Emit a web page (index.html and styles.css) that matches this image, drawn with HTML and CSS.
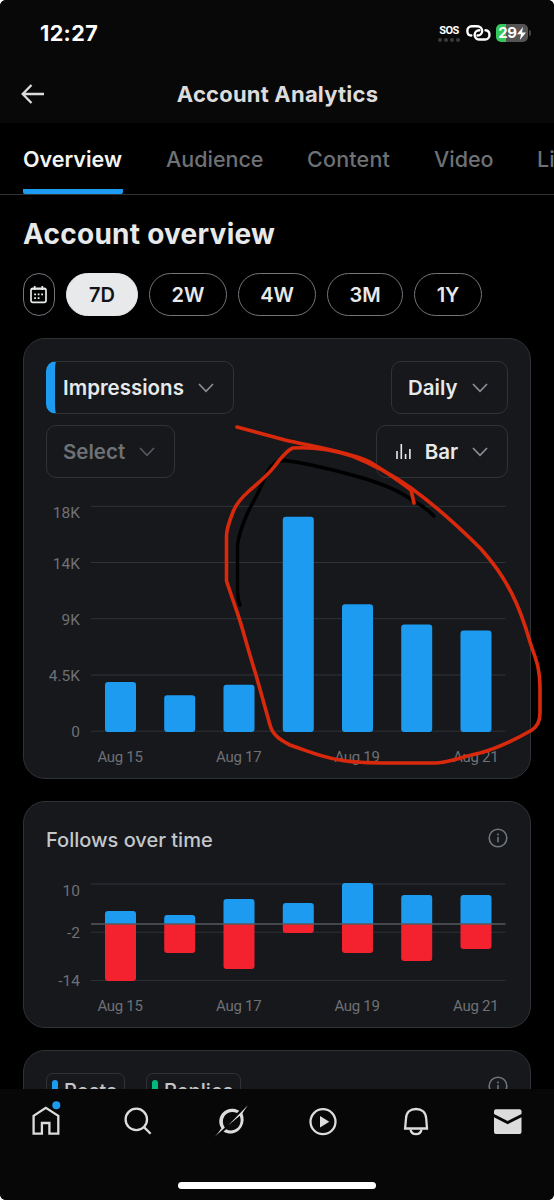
FILE: index.html
```html
<!DOCTYPE html>
<html lang="en">
<head>
<meta charset="utf-8">
<title>Account Analytics</title>
<link rel="stylesheet" href="styles.css">
</head>
<body>
<div class="screen">

  <header class="header">
    <div class="statusbar">
      <span class="time">12:27</span>
      <div class="status-icons">
        <div class="sos"><span>SOS</span><div class="dots"><i></i><i></i><i></i><i></i></div></div>
        <svg class="link" width="25" height="18" viewBox="0 0 26 18" fill="none" stroke="#fff" stroke-width="2.5" stroke-linecap="round">
          <path d="M5.5 11.6C2.8 11.4 1.4 9.2 1.4 6.8C1.4 4 3.4 2 6 2H11.5C14.6 2 16.8 4 16.8 6.8C16.8 9.6 14.6 11.6 12 11.6"/>
          <path d="M20.3 6.2C23 6.4 24.4 8.6 24.4 11C24.4 13.8 22.4 15.8 19.8 15.8H14.3C11.2 15.8 9 13.8 9 11C9 8.2 11.2 6.2 13.8 6.2"/>
        </svg>
        <div class="battery">
          <span>29</span>
          <svg width="9" height="13" viewBox="0 0 9 13"><path d="M6 0L0 7.3H4L2.8 13L9 5.4H5z" fill="#fff"/></svg>
        </div>
        <i class="battery-tip"></i>
      </div>
    </div>
    <div class="titlebar">
      <svg class="back" width="24" height="20" viewBox="0 0 24 20" fill="none" stroke="#dcdcdc" stroke-width="2.3">
        <path d="M10.5 1L1.7 10L10.5 19M1.7 10H23"/>
      </svg>
      <h1>Account Analytics</h1>
    </div>
  </header>

  <nav class="tabs">
    <a class="tab active">Overview</a>
    <a class="tab audience">Audience</a>
    <a class="tab content">Content</a>
    <a class="tab video">Video</a>
    <a class="tab">Live</a>
  </nav>

  <main class="main">
    <h2>Account overview</h2>

    <div class="ranges">
      <button class="pill calendar">
        <svg width="17" height="18" viewBox="0 0 17 18" fill="none" stroke="#e7e9ea" stroke-width="1.7">
          <rect x="1" y="2.4" width="15" height="14" rx="1.8"/>
          <path d="M4.7 0V4M12.3 0V4M1 3H16"/>
          <path d="M4.2 8.3H6M7.7 8.3H9.5M11.2 8.3H13M4.2 12.2H6M7.7 12.2H9.5" stroke-width="1.8"/>
        </svg>
      </button>
      <button class="pill d7 selected">7D</button>
      <button class="pill w2">2W</button>
      <button class="pill w4">4W</button>
      <button class="pill m3">3M</button>
      <button class="pill y1">1Y</button>
    </div>

    <section class="card impressions">
      <div class="selects">
        <div class="select metric">Impressions<svg width="16" height="10" viewBox="0 0 16 10"><path d="M1 1L8 8.3L15 1"/></svg></div>
        <div class="select daily">Daily<svg width="16" height="10" viewBox="0 0 16 10"><path d="M1 1L8 8.3L15 1"/></svg></div>
      </div>
      <div class="selects">
        <div class="select empty">Select<svg width="16" height="10" viewBox="0 0 16 10"><path d="M1 1L8 8.3L15 1"/></svg></div>
        <div class="select type">
          <svg class="bars" width="15" height="17" viewBox="0 0 15 17"><path d="M1 8V16M5.3 1V16M9.6 11V16M13.9 6V16"/></svg>
          Bar<svg width="16" height="10" viewBox="0 0 16 10"><path d="M1 1L8 8.3L15 1"/></svg>
        </div>
      </div>
      <svg class="chart" width="506" height="286" viewBox="24 490 506 286">
        <path class="grid" d="M91 506.3H505.5M91 562.5H505.5M91 618.7H505.5M91 675H505.5M91 731.2H505.5"/>
        <g class="ylabels">
          <text x="80" y="518.3">18K</text>
          <text x="80" y="568.5">14K</text>
          <text x="80" y="624.7">9K</text>
          <text x="80" y="681">4.5K</text>
          <text x="80" y="737.3">0</text>
        </g>
        <g class="up">
          <rect x="105" y="682" width="31" height="50" rx="3"/>
          <rect x="164.2" y="695.2" width="31" height="36.8" rx="3"/>
          <rect x="223.5" y="684.7" width="31" height="47.3" rx="3"/>
          <rect x="282.8" y="516.8" width="31" height="215.2" rx="3"/>
          <rect x="342" y="604.2" width="31" height="127.8" rx="3"/>
          <rect x="401.2" y="624.5" width="31" height="107.5" rx="3"/>
          <rect x="460.5" y="630.4" width="31" height="101.6" rx="3"/>
        </g>
        <g class="xlabels">
          <text x="120" y="762.3">Aug 15</text>
          <text x="238.7" y="762.3">Aug 17</text>
          <text x="357" y="762.3">Aug 19</text>
          <text x="475.7" y="762.3">Aug 21</text>
        </g>
      </svg>
    </section>

    <section class="card follows">
      <div class="card-head">
        <h3>Follows over time</h3>
        <svg class="info" width="20" height="20" viewBox="0 0 20 20"><circle cx="10" cy="10" r="8.8"/><path d="M10 9V14.3M10 5.6V7.4"/></svg>
      </div>
      <svg class="chart" width="506" height="155" viewBox="24 872 506 155">
        <path class="grid" d="M91 884H505.5M91 932.2H505.5M91 980.6H505.5"/>
        <g class="ylabels">
          <text x="80" y="896">10</text>
          <text x="80" y="938">-2</text>
          <text x="80" y="986.3">-14</text>
        </g>
        <g class="up">
          <path d="M105 924V914a3 3 0 0 1 3-3h25a3 3 0 0 1 3 3v10z"/>
          <path d="M164.2 924V918a3 3 0 0 1 3-3h25a3 3 0 0 1 3 3v6z"/>
          <path d="M223.5 924V902a3 3 0 0 1 3-3h25a3 3 0 0 1 3 3v22z"/>
          <path d="M282.8 924V906a3 3 0 0 1 3-3h25a3 3 0 0 1 3 3v18z"/>
          <path d="M342 924V886a3 3 0 0 1 3-3h25a3 3 0 0 1 3 3v38z"/>
          <path d="M401.2 924V898a3 3 0 0 1 3-3h25a3 3 0 0 1 3 3v26z"/>
          <path d="M460.5 924V898a3 3 0 0 1 3-3h25a3 3 0 0 1 3 3v26z"/>
        </g>
        <g class="down">
          <path d="M105 924V978a3 3 0 0 0 3 3h25a3 3 0 0 0 3-3V924z"/>
          <path d="M164.2 924V950a3 3 0 0 0 3 3h25a3 3 0 0 0 3-3V924z"/>
          <path d="M223.5 924V966a3 3 0 0 0 3 3h25a3 3 0 0 0 3-3V924z"/>
          <path d="M282.8 924V930a3 3 0 0 0 3 3h25a3 3 0 0 0 3-3V924z"/>
          <path d="M342 924V950a3 3 0 0 0 3 3h25a3 3 0 0 0 3-3V924z"/>
          <path d="M401.2 924V958a3 3 0 0 0 3 3h25a3 3 0 0 0 3-3V924z"/>
          <path d="M460.5 924V946a3 3 0 0 0 3 3h25a3 3 0 0 0 3-3V924z"/>
        </g>
        <path class="zero" d="M91 924H505.5"/>
        <g class="xlabels">
          <text x="120" y="1011">Aug 15</text>
          <text x="238.7" y="1011">Aug 17</text>
          <text x="357" y="1011">Aug 19</text>
          <text x="475.7" y="1011">Aug 21</text>
        </g>
      </svg>
    </section>

    <section class="card posts">
      <div class="chip chip-posts"><i class="blue"></i>Posts</div>
      <div class="chip chip-replies"><i class="green"></i>Replies</div>
      <svg class="info" width="20" height="20" viewBox="0 0 20 20"><circle cx="10" cy="10" r="8.8"/><path d="M10 9V14.3M10 5.6V7.4"/></svg>
    </section>
  </main>

  <footer class="bottom">
    <nav class="bottomnav">
      <svg width="36" height="36" viewBox="28.5 1099 36 36" class="outline">
        <path d="M34.1 1133.7V1115.8L46.3 1107.9L58.8 1115.8V1133.7H49.9V1123H42.4V1133.7z"/>
        <circle class="badge" cx="56.8" cy="1105.3" r="4"/>
      </svg>
      <svg width="36" height="36" viewBox="120 1099 36 36" class="outline">
        <circle cx="136.3" cy="1119.4" r="10.7"/><path d="M144 1127.1L150.6 1133.8"/>
      </svg>
      <svg width="36" height="36" viewBox="212.5 1099 36 36" class="solid">
        <path d="M238.8 1110.8C233 1107.2 225.500 1108.500 221.500 1113.500C218 1118 218 1124 220.900 1128.300C219 1131.500 216.500 1134.500 213.800 1137L224.300 1127.800C221.800 1124 221.700 1119.500 224 1116C227 1111.700 232 1110.900 236.600 1113z"/>
        <path d="M227.500 1125.500L247.300 1105.200C245.500 1108.500 242.800 1111 242 1113.500C243.700 1118 243.500 1122.500 241.300 1126.500C237.500 1133.500 229.500 1135.500 223 1131.500L225.800 1129.200C230.500 1132 236.500 1130 239 1125.300C240.500 1122 240.400 1119 239.300 1115.800z"/>
      </svg>
      <svg width="36" height="36" viewBox="305 1099 36 36" class="outline">
        <circle cx="323" cy="1121.700" r="12.500"/><path class="fill" d="M320 1116V1127.500L329.300 1121.700z"/>
      </svg>
      <svg width="36" height="36" viewBox="397.500 1099 36 36" class="outline">
        <path d="M404.600 1128.500L405.500 1118.500C405.700 1112.300 409.800 1109 415.500 1109C421.200 1109 425.300 1112.300 425.700 1118.500L426.500 1128.500z"/><path d="M410 1129.500C411 1135.700 420 1135.700 421 1129.500"/>
      </svg>
      <svg width="36" height="36" viewBox="490 1099 36 36" class="solid">
        <path d="M494 1114V1111.300a2 2 0 0 1 2-2H519.500a2 2 0 0 1 2 2V1114L507.700 1121z"/>
        <path d="M494 1117.300L507.700 1124.200L521.500 1117.300V1132a2 2 0 0 1-2 2H496a2 2 0 0 1-2-2z"/>
      </svg>
    </nav>
    <div class="home-indicator"></div>
  </footer>

  <!-- pen strokes over the chart -->
  <svg class="scribble" width="554" height="1200" viewBox="0 0 554 1200">
    <path class="black" d="M240 605C238 600 237.500 597 237.500 592V545C239 533 243 523 248 512C254 500 259 492 263 482C268 469 272 460.500 285 460.500C305 463 330 469 352 475C375 481 398 490 412 500C422 505 428 510 434 516"/>
    <path class="red" d="M237 427L285 440C310 446 350 452 370 462C385 471 396 479 411 490L414 503"/>
    <path class="red" d="M411 488C394 476 375 465 352 456C330 449 310 447 293 448C287 450 280 459 274 467C267 476 257 484 249 491C240 499 236 504 233 512C229 522 226.500 530 226.500 536V581L236 609C242 625 245 640 256 675L270 725C273 736 281 740 290 745C305 750 320 757 340 760C355 763 370 763 390 763H436C452 762 460 757 480 753C500 748 518 738 532 730C538 726 540 721 540 713V690C540 665 535 658 530 642C520 607 508 579 481 549C460 528 433 504 411 488z"/>
  </svg>
</div>
</body>
</html>
```
FILE: styles.css
```css
* { box-sizing: border-box; }
body {
	margin: 0;
	background: #fff;
	font-family: Inter, "Liberation Sans", sans-serif;
	color: #e7e9ea;
}
h1, h2, h3 { margin: 0; }
svg { display: block; flex: none; }

.screen {
	position: relative;
	width: 554px; height: 1200px;
	display: flex; flex-direction: column;
	overflow: hidden;
	background: #000;
	border-radius: 6px;
}

/* header */
.header { flex: none; height: 123px; background: #080808; }
.statusbar {
	display: flex; justify-content: space-between;
	height: 64px; padding: 20px 23px 0 40px;
}
.time {
	font-size: 21.5px; line-height: 27px; font-weight: 700;
	letter-spacing: .4px; color: #fff;
}
.status-icons { display: flex; align-items: flex-start; padding-top: 4px; }
.sos { width: 22px; margin-right: 6px; font: bold 11px/13px Roboto, sans-serif; letter-spacing: -.6px; color: #fff; text-align: center; }
.dots { display: flex; justify-content: space-between; margin-top: 1px; }
.dots i { width: 4px; height: 4px; border-radius: 2px; background: #3a3a3a; }
.link { margin-right: 5px; }
.battery {
	display: flex; align-items: center; justify-content: center;
	width: 32px; height: 18px; border-radius: 5px;
	background: linear-gradient(to right, #34c759 30%, #545454 30%);
	font-size: 15px; line-height: 18px; font-weight: bold; letter-spacing: -.3px; color: #fff;
}
.battery-tip { width: 2px; height: 6px; margin: 6px 0 0 1px; border-radius: 0 2px 2px 0; background: #444; }
.titlebar { display: flex; align-items: center; height: 60px; padding: 0 21px; }
.titlebar h1 { flex: 1; margin-right: 23px; text-align: center; font-size: 22px; line-height: 28px; font-weight: 700; letter-spacing: .2px; color: #dcdcdc; }

/* tabs */
.tabs {
	flex: none; display: flex; gap: 43px;
	height: 72px; padding-left: 23px;
	border-bottom: 1px solid #2f3336;
	overflow: hidden; white-space: nowrap;
}
.tab {
	flex: none; width: 98px; height: 71px;
	font-size: 21.5px; line-height: 72px; font-weight: 500;
	color: #6e7175;
}
.tab.active { width: 100px; font-weight: 600; color: #f4f5f5; border-bottom: 5px solid #1d9bf0; border-radius: 2px; }
.tab.content { width: 84px; letter-spacing: .2px; }
.tab.video { width: 60px; }

/* content */
.main { flex: 1; min-height: 0; overflow: hidden; padding: 0 23px; }
.main h2 { height: 78px; padding-top: 20px; font-size: 28px; line-height: 38px; font-weight: 700; letter-spacing: .25px; }
.ranges { display: flex; gap: 11px; margin-bottom: 22px; }
.pill {
	display: flex; align-items: center; justify-content: center;
	height: 43px; padding: 0;
	border: 1px solid #71767b; border-radius: 22px;
	background: none; color: #e7e9ea;
	font: 600 20px Inter, sans-serif;
}
.calendar { width: 32px; padding-right: 1px; }
.d7 { width: 72px; }
.w2, .w4 { width: 78px; }
.m3 { width: 76px; }
.y1 { width: 68px; }
.pill.selected { background: #e7e9ea; border-color: #e7e9ea; color: #0f1419; }

.card { border: 1px solid #2f3336; border-radius: 22px; background: #16181c; }
.impressions { height: 441px; padding-top: 22px; margin-bottom: 22px; }
.selects { display: flex; justify-content: space-between; height: 53px; margin: 0 22px 11px; }
.select {
	display: flex; align-items: center; justify-content: space-between;
	padding: 0 19px 0 16px;
	border: 1px solid #2f3336; border-radius: 10px;
	font-size: 20.5px; font-weight: 600;
}
.select svg { fill: none; stroke: #8b9095; stroke-width: 1.6; }
.select .bars { stroke: #e7e9ea; }
.metric { width: 188px; padding-left: 8px; border-left: 9px solid #1d9bf0; }
.daily { width: 117px; }
.empty { width: 129px; color: #6e7175; }
.empty svg { stroke: #55595d; }
.type { width: 132px; padding-left: 19px; }

.chart .grid { stroke: #2f3336; stroke-width: 1; }
.chart .zero { stroke: #55585c; stroke-width: 1.3; }
.chart text { font-family: Roboto, sans-serif; font-size: 15px; letter-spacing: -.3px; fill: #6e7175; }
.chart .ylabels text { font-size: 15.5px; letter-spacing: 0; }
.ylabels { text-anchor: end; }
.xlabels { text-anchor: middle; }
.up { fill: #1d9bf0; }
.down { fill: #f4212e; }
.impressions .chart { margin-top: 12px; }
.impressions .selects + .selects { margin-bottom: 0; }

.follows { height: 227px; margin-bottom: 22px; }
.card-head { display: flex; justify-content: space-between; height: 70px; padding: 26px 22px 0; }
.card-head h3 { font-size: 20px; line-height: 25px; font-weight: 500; color: #c4c7ca; }
.info { fill: none; stroke: #71767b; stroke-width: 1.6; }

.posts { display: flex; height: 200px; padding: 22px 22px 0; }
.chip {
	display: flex; height: 40px; padding: 6px 0 0 5px;
	border: 1px solid #2f3336; border-radius: 7px;
	font-size: 20px; line-height: 22px; font-weight: 500; color: #c4c7ca;
}
.chip i { width: 6px; height: 22px; margin-right: 6px; border-radius: 3px; }
.chip .blue { background: #1d9bf0; }
.chip .green { background: #00ba7c; }
.chip-posts { width: 79px; margin-right: 21px; }
.chip-replies { width: 95px; }
.posts .info { margin: 3px 0 0 auto; }

/* bottom bar */
.bottom { flex: none; height: 111px; background: #070707; }
.bottomnav { display: flex; justify-content: space-between; height: 93px; padding: 10px 28px 0; }
.bottomnav svg { overflow: visible; }
.outline { fill: none; stroke: #dcdcdc; stroke-width: 2.3; }
.outline .badge { fill: #1d9bf0; stroke: none; }
.outline .fill, .solid { fill: #dcdcdc; stroke: none; }
.home-indicator { width: 198px; height: 7px; margin: 0 auto; border-radius: 4px; background: #fff; }

.scribble { position: absolute; left: 0; top: 0; fill: none; stroke-linecap: round; stroke-linejoin: round; pointer-events: none; }
.scribble .red { stroke: #d9290c; stroke-width: 3.6; }
.scribble .black { stroke: #000; stroke-width: 3.4; }
```
